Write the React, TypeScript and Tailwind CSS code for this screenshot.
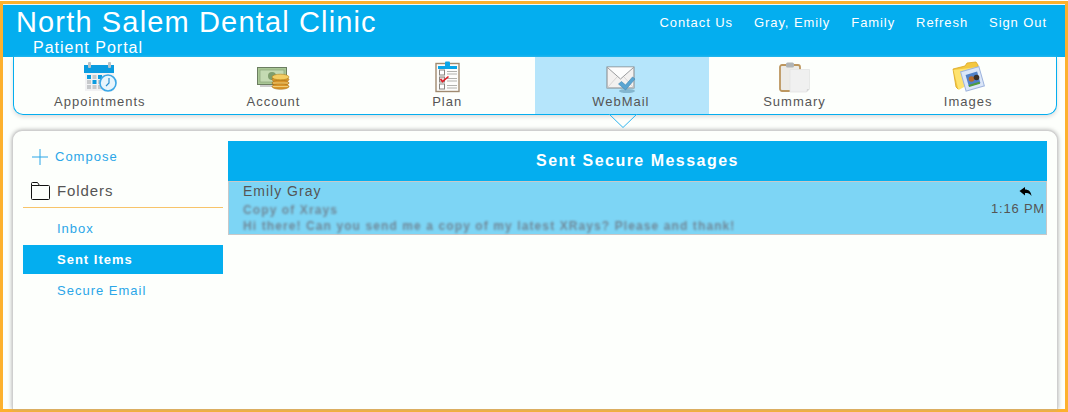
import React from 'react';

const CalendarIcon = () => (
  <svg width="34" height="32" viewBox="0 0 34 32">
    <rect x="1" y="5" width="29" height="25" fill="#f1f2f3" />
    <rect x="0" y="4" width="30" height="8" fill="#0a9ce0" />
    <rect x="4" y="1" width="3" height="6" rx="1" fill="#b9c2c7" />
    <rect x="24" y="1" width="3" height="6" rx="1" fill="#b9c2c7" />
    {[0, 1, 2, 3].map(c => [0, 1, 2].map(r => (
      <rect
        key={`${c}-${r}`}
        x={3 + c * 5.5}
        y={14 + r * 5}
        width="4"
        height="4"
        fill={(c === 0 && r === 0) || (c === 1 && r === 1) || (c === 2 && r === 0) ? '#0a9ce0' : '#c6c9cb'}
      />
    )))}
    <circle cx="24" cy="22" r="8" fill="#e8f5fc" stroke="#3aa7e6" strokeWidth="1.6" />
    <path d="M25 17v5l-3 3" fill="none" stroke="#2b8fd0" strokeWidth="1.2" />
  </svg>
);

const MoneyIcon = () => (
  <svg width="34" height="26" viewBox="0 0 34 26">
    <rect x="0.5" y="1.5" width="29" height="17" fill="#a9c795" stroke="#6b7d60" />
    <rect x="3" y="4" width="24" height="12" fill="#c4dab2" stroke="#8aa378" strokeWidth="0.7" />
    <circle cx="15" cy="10" r="4" fill="#7f9e6d" />
    <path d="M3 20h12" stroke="#ccc" strokeWidth="2" />
    {[12, 15.5, 19].map(y => (
      <ellipse key={y} cx="23.5" cy={y + 1.5} rx="8.5" ry="2.8" fill="#d9952a" stroke="#a8701a" strokeWidth="0.6" />
    ))}
    <ellipse cx="23.5" cy="11" rx="8.5" ry="2.8" fill="#f3cd63" stroke="#b8861f" strokeWidth="0.6" />
    <path d="M16 17h15M16 20.5h15" stroke="#f6dc8c" strokeWidth="0.8" />
  </svg>
);

const PlanIcon = () => (
  <svg width="26" height="32" viewBox="0 0 26 32">
    <rect x="1" y="2.5" width="23" height="28" fill="#fdfdfb" stroke="#a08a70" strokeWidth="1.4" />
    <rect x="3" y="5" width="19" height="3" fill="#0aa5e8" />
    <rect x="10" y="0.5" width="5" height="5" rx="1" fill="#0aa5e8" />
    {[9, 16, 23].map(y => (
      <g key={y}>
        <rect x="4.5" y={y} width="5" height="5" fill={y === 16 ? '#e9d8d8' : '#fff'} stroke="#8a8580" />
        <path d={`M12 ${y + 1.5}h10M12 ${y + 4}h10`} stroke="#a8a8a4" strokeWidth="0.9" />
      </g>
    ))}
    <path d="M5.5 18l2 2.5 6-5" fill="none" stroke="#e01b24" strokeWidth="1.6" />
  </svg>
);

const MailIcon = () => (
  <svg width="32" height="30" viewBox="0 0 32 30">
    <rect x="1" y="2" width="27" height="21" fill="#f3f1f0" stroke="#85878a" strokeWidth="1" />
    <path d="M1.5 2.500L14.500 14 27.500 2.500" fill="#fdfdfd" stroke="#9a9c9e" />
    <path d="M1.500 22.500L11 12M27.500 22.500L18 12" stroke="#d8d5d4" />
    <ellipse cx="21" cy="26" rx="8" ry="2" fill="#84b6cf" />
    <path d="M12.500 19l3-2.500 4 3.500 7-8 2.500 2-9.500 11z" fill="#5aa5d2" stroke="#3f86b4" strokeWidth="0.6" />
  </svg>
);

const SummaryIcon = () => (
  <svg width="32" height="32" viewBox="0 0 32 32">
    <rect x="1" y="3" width="20" height="26" rx="2" fill="#ecebe6" stroke="#bd975f" strokeWidth="1.8" />
    <rect x="7" y="0.500" width="8" height="5" rx="1.500" fill="#b0b4b5" />
    <path d="M11 7.500h19.500V27l-3 3H11z" fill="#f0f0f0" stroke="#e3e3e3" strokeWidth="0.8" />
    <path d="M27.500 30l.5-3h2.500z" fill="#d6d6d6" />
  </svg>
);

const ImagesIcon = () => (
  <svg width="34" height="32" viewBox="0 0 34 32">
    <path d="M1 8l12-3 2-3 9-1 2 3 1 8-21 16-2-2z" fill="#f4c73f" stroke="#dba71f" strokeWidth="0.8" />
    <path d="M1.500 9l24-3-2 14-17 9z" fill="#fee36f" />
    <rect x="11" y="8" width="19" height="20" transform="rotate(-16 20 18)" fill="#dbe6f8" stroke="#9db3de" />
    <rect x="15" y="12" width="12" height="12" transform="rotate(-16 21 18)" fill="#4f80c8" />
    <circle cx="19.500" cy="18" r="2.800" fill="#b5692a" />
    <circle cx="24.500" cy="16.500" r="2.800" fill="#39302a" />
    <path d="M16.500 24l11-3.200.6 2-11 3.200z" fill="#4f9b3d" />
  </svg>
);

const tabs = [
  { label: 'Appointments', icon: <CalendarIcon />, pad: 'pt-[4px]' },
  { label: 'Account', icon: <MoneyIcon />, pad: 'pt-[9px]' },
  { label: 'Plan', icon: <PlanIcon />, pad: 'pt-[4px]' },
  { label: 'WebMail', icon: <MailIcon />, pad: 'pt-[8px]' },
  { label: 'Summary', icon: <SummaryIcon />, pad: 'pt-[5px]' },
  { label: 'Images', icon: <ImagesIcon />, pad: 'pt-[4px]' },
];

const topLinks = ['Contact Us', 'Gray, Emily', 'Family', 'Refresh', 'Sign Out'];

export default function App() {
  return (
    <div className="w-[1068px] h-[412px] overflow-hidden bg-white pt-px font-['Liberation_Sans',Arial,sans-serif]">
      <div className="h-[411px] border-[3px] border-[#fdb12e] bg-[#eaf8fd] flex flex-col">
        <header className="mt-px h-[52px] shrink-0 bg-[#04aeef] text-white flex justify-between">
          <div className="pl-[13px] pt-px">
            <div className="text-[29px] leading-[33px] tracking-[1.15px]">North Salem Dental Clinic</div>
            <div className="pl-[17px] text-[16px] leading-[18px] tracking-[1px]">Patient Portal</div>
          </div>
          <nav className="flex gap-[21px] pr-[18px] pt-[10px] text-[13px] font-medium leading-[16px] tracking-[0.92px]">
            {topLinks.map(link => (
              <span key={link}>{link}</span>
            ))}
          </nav>
        </header>

        <div className="flex-1 flex flex-col bg-[#fdfffc]">
          <div className="relative ml-[10px] mr-[8px] h-[58px] shrink-0 grid grid-cols-6 rounded-b-[10px] border border-t-0 border-[#04aeef] shadow-[0_2px_4px_#ddd]">
            {tabs.map(tab => (
              <div
                key={tab.label}
                className={`relative flex flex-col items-center ${tab.pad} ${tab.label === 'WebMail' ? 'bg-[#b5e5fb]' : ''}`}
              >
                <div className="h-[32px] flex items-start">{tab.icon}</div>
                <span className="absolute top-[37px] pr-[2px] text-[13px] leading-[15px] tracking-[1px] text-[#555]">{tab.label}</span>
              </div>
            ))}
            <svg className="absolute left-[594px] top-[57px]" width="30" height="15" viewBox="0 0 30 15">
              <path d="M1 0l14 13.500L29 0" fill="none" stroke="#2fb4ee" strokeWidth="1" />
            </svg>
          </div>

          <main className="ml-[9px] mr-[7px] mt-[15px] flex-1 flex gap-[5px] rounded-t-[10px] border border-b-0 border-[#cfcfcf] bg-[#fdfffc] px-[10px] pt-[10px] shadow-[0_0_4px_#aaa]">
            <aside className="w-[200px] shrink-0">
              <div className="flex items-center h-[32px] pl-[9px] gap-[7px] text-[13px] tracking-[1px] text-[#2ba6e8]">
                <svg width="16" height="16" viewBox="0 0 16 16" fill="none" stroke="#2ba6e8" strokeWidth="1">
                  <path d="M8 0v16M0 8h16" />
                </svg>
                <span>Compose</span>
              </div>
              <div className="flex items-center h-[35px] pl-[7px] pt-[2px] gap-[7px] text-[15px] tracking-[0.9px] text-[#555] border-b border-[#f8c46a]">
                <svg width="20" height="18" viewBox="0 0 20 18" fill="none" stroke="#111" strokeWidth="1">
                  <path d="M1.500 3.500V1.500a1 1 0 0 1 1-1h5l2 3h9a1 1 0 0 1 1 1v12a1 1 0 0 1-1 1h-16a1 1 0 0 1-1-1z" />
                  <path d="M1.500 3.500h8" />
                </svg>
                <span>Folders</span>
              </div>
              <div className="mt-[6px] h-[31px] flex items-center pb-[2px] pl-[34px] text-[13px] tracking-[1px] text-[#2ba6e8]">Inbox</div>
              <div className="h-[29px] flex items-center pl-[34px] text-[13px] font-bold tracking-[1px] text-white bg-[#04aeef]">Sent Items</div>
              <div className="h-[33px] flex items-center pl-[34px] text-[13px] tracking-[1px] text-[#2ba6e8]">Secure Email</div>
            </aside>

            <section className="flex-1">
              <div className="h-[40px] flex items-center justify-center bg-[#04aeef] text-white text-[16px] font-bold tracking-[1.47px]">
                Sent Secure Messages
              </div>
              <div className="h-[54px] border border-[#c8c8c8] bg-[#7dd5f5] flex justify-between pl-[14px] pr-px">
                <div className="min-w-0">
                  <div className="text-[14px] leading-[18px] tracking-[1px] text-[#555]">Emily Gray</div>
                  <div className="text-[12px] leading-[16px] pt-[2px] font-bold tracking-[1.1px] text-[#6f8797] blur-[1.2px]">Copy of Xrays</div>
                  <div className="text-[12px] leading-[16px] font-bold tracking-[1.1px] text-[#6f8797] blur-[1.2px]">Hi there! Can you send me a copy of my latest XRays? Please and thank!</div>
                </div>
                <div className="flex flex-col items-end">
                  <svg className="mt-[5px] mr-[13px]" width="13" height="10" viewBox="0 0 13 10">
                    <path d="M0.500 4L6 0v2.500c3.500 0 6 2 6.500 6.500C11 6.500 9 6 6 6v2.500z" fill="#000" />
                  </svg>
                  <span className="text-[13px] leading-[15px] pt-[4px] tracking-[0.8px] text-[#555]">1:16 PM</span>
                </div>
              </div>
            </section>
          </main>
        </div>
      </div>
    </div>
  );
}
